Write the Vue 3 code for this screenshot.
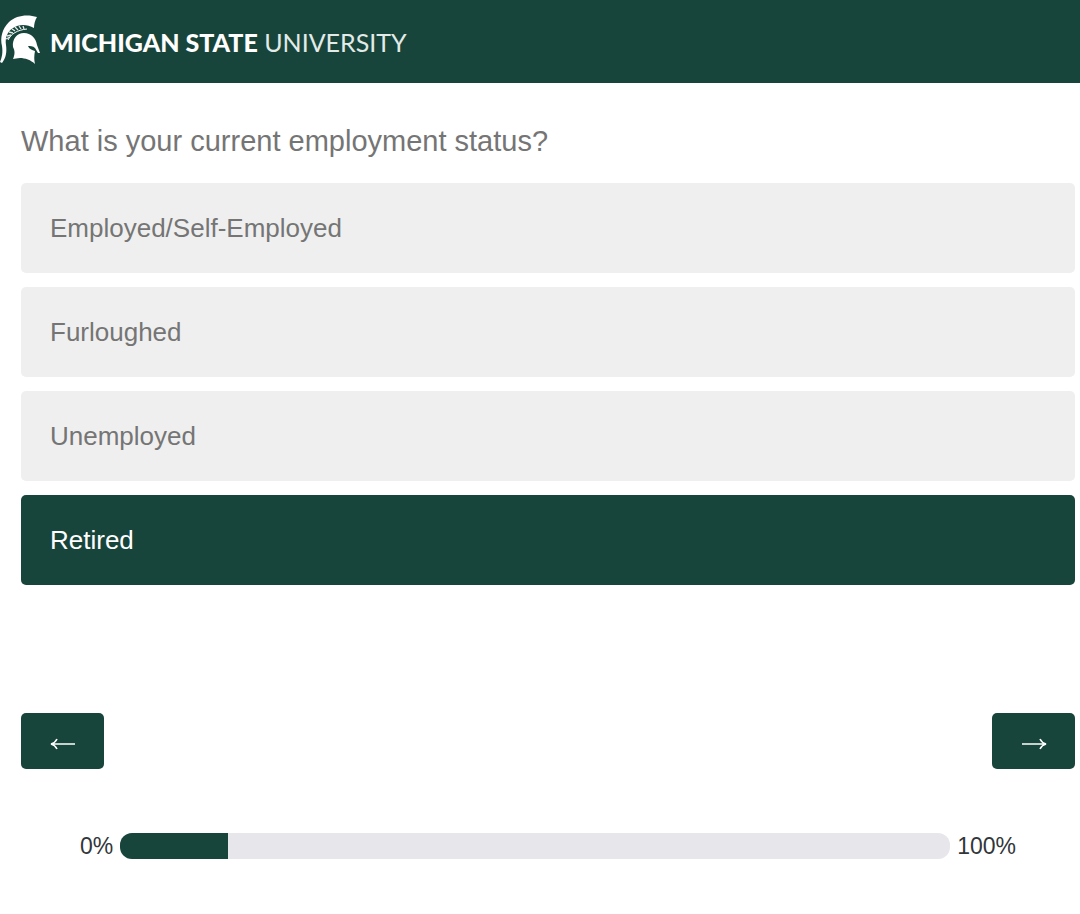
<script setup>
import { ref } from 'vue'

const options = ['Employed/Self-Employed', 'Furloughed', 'Unemployed', 'Retired']
const selected = ref('Retired')

// survey progress in percent
const progress = ref(13)
</script>

<template>
  <div class="survey">
    <header>
      <svg class="helmet" viewBox="0 0 42 52" aria-hidden="true">
        <path fill="#fff" d="M37 3C28 0 16 1 9 8C2 15 0 24 2 32C3 39 2 43 0 48L2 49C6 44 7 38 6 31C5 24 7 18 13 14C19 10 27 10 34 14C34 10 35 6 37 3Z" />
        <path fill="none" stroke="#e3ebe8" stroke-width="1.3" d="M6 25L10 23M7 22L11 21M9 18L13 19M12 15L15 17M15 13L18 16M19 12L21 15M23 12L24 15" />
        <path fill="none" stroke="#fff" stroke-width="1" d="M8 26C11 20 17 16 27 15" />
        <path fill="#fff" d="M13 45C15 40 15 37 13 33C12 25 17 19 24 19C31 19 36 24 37 31L40 39L38 39L35 34C33 32 30 32 28 32C29 35 32 36 35 37C34 42 34 46 35 50C31 46 25 44 20 44C17 44 15 45 13 45Z" />
      </svg>
      <div class="wordmark"><strong>MICHIGAN STATE</strong> UNIVERSITY</div>
    </header>

    <form @submit.prevent>
      <fieldset>
        <legend>What is your current employment status?</legend>
        <div class="options">
          <label
            v-for="option in options"
            :key="option"
            class="option"
            :class="{ selected: option === selected }"
          >
            <input v-model="selected" type="radio" name="employment" :value="option" />
            <span>{{ option }}</span>
          </label>
        </div>
      </fieldset>

      <div class="buttons">
        <button type="button" aria-label="Back">
          <svg viewBox="0 0 26 12"><path d="M25 6H2M7 1Q5 5 1 6Q5 7 7 11" /></svg>
        </button>
        <button type="button" aria-label="Next">
          <svg viewBox="0 0 26 12"><path d="M1 6H24M19 1Q21 5 25 6Q21 7 19 11" /></svg>
        </button>
      </div>
    </form>

    <div class="progress">
      <span>0%</span>
      <div class="track" role="progressbar" aria-valuemin="0" aria-valuemax="100" :aria-valuenow="progress">
        <div class="fill" :style="{ width: progress + '%' }"></div>
      </div>
      <span>100%</span>
    </div>
  </div>
</template>

<style>
body {
  background-color: #fff;
}
</style>

<style scoped>
.survey {
  font-family: 'Liberation Sans', Arial, sans-serif;
  color: #757575;
}

header {
  display: flex;
  align-items: center;
  gap: 8px;
  height: 83px;
  padding-bottom: 4px;
  box-sizing: border-box;
  background-color: #18453b;
}

.helmet {
  width: 42px;
  height: 52px;
}

.wordmark {
  padding-top: 4px;
  font-family: Lato, sans-serif;
  font-size: 25px;
  font-weight: 400;
  line-height: 32px;
  color: #e3ebe8;
  white-space: nowrap;
}

.wordmark strong {
  font-weight: 900;
  color: #fff;
}

form {
  padding: 40px 5px 0 21px;
}

fieldset {
  border: none;
  margin: 0;
  padding: 0;
  min-width: 0;
}

legend {
  padding: 0;
  margin-bottom: 24px;
  font-size: 29px;
  line-height: 36px;
}

.options {
  display: flex;
  flex-direction: column;
  gap: 14px;
}

.option {
  position: relative;
  display: flex;
  align-items: center;
  min-height: 90px;
  box-sizing: border-box;
  padding: 16px 29px;
  border-radius: 5px;
  background-color: #efefef;
  font-size: 26px;
  line-height: 32px;
  cursor: pointer;
}

.option input {
  position: absolute;
  opacity: 0;
}

.option.selected {
  background-color: #18453b;
  color: #fff;
}

.buttons {
  display: flex;
  justify-content: space-between;
  margin-top: 128px;
}

button {
  display: flex;
  align-items: center;
  justify-content: center;
  width: 83px;
  height: 56px;
  padding: 6px 0 0;
  border: none;
  border-radius: 5px;
  background-color: #18453b;
  cursor: pointer;
}

button svg {
  width: 26px;
  height: 12px;
  fill: none;
  stroke: #fff;
  stroke-width: 1.6;
}

.progress {
  display: flex;
  align-items: center;
  gap: 7px;
  margin-top: 64px;
  padding: 0 64px 32px 80px;
  font-size: 23px;
  line-height: 26px;
  color: #32363a;
}

.track {
  flex: 1;
  height: 26px;
  border-radius: 12px;
  background-color: #e6e6eb;
  overflow: hidden;
}

.fill {
  height: 100%;
  background-color: #18453b;
}
</style>
